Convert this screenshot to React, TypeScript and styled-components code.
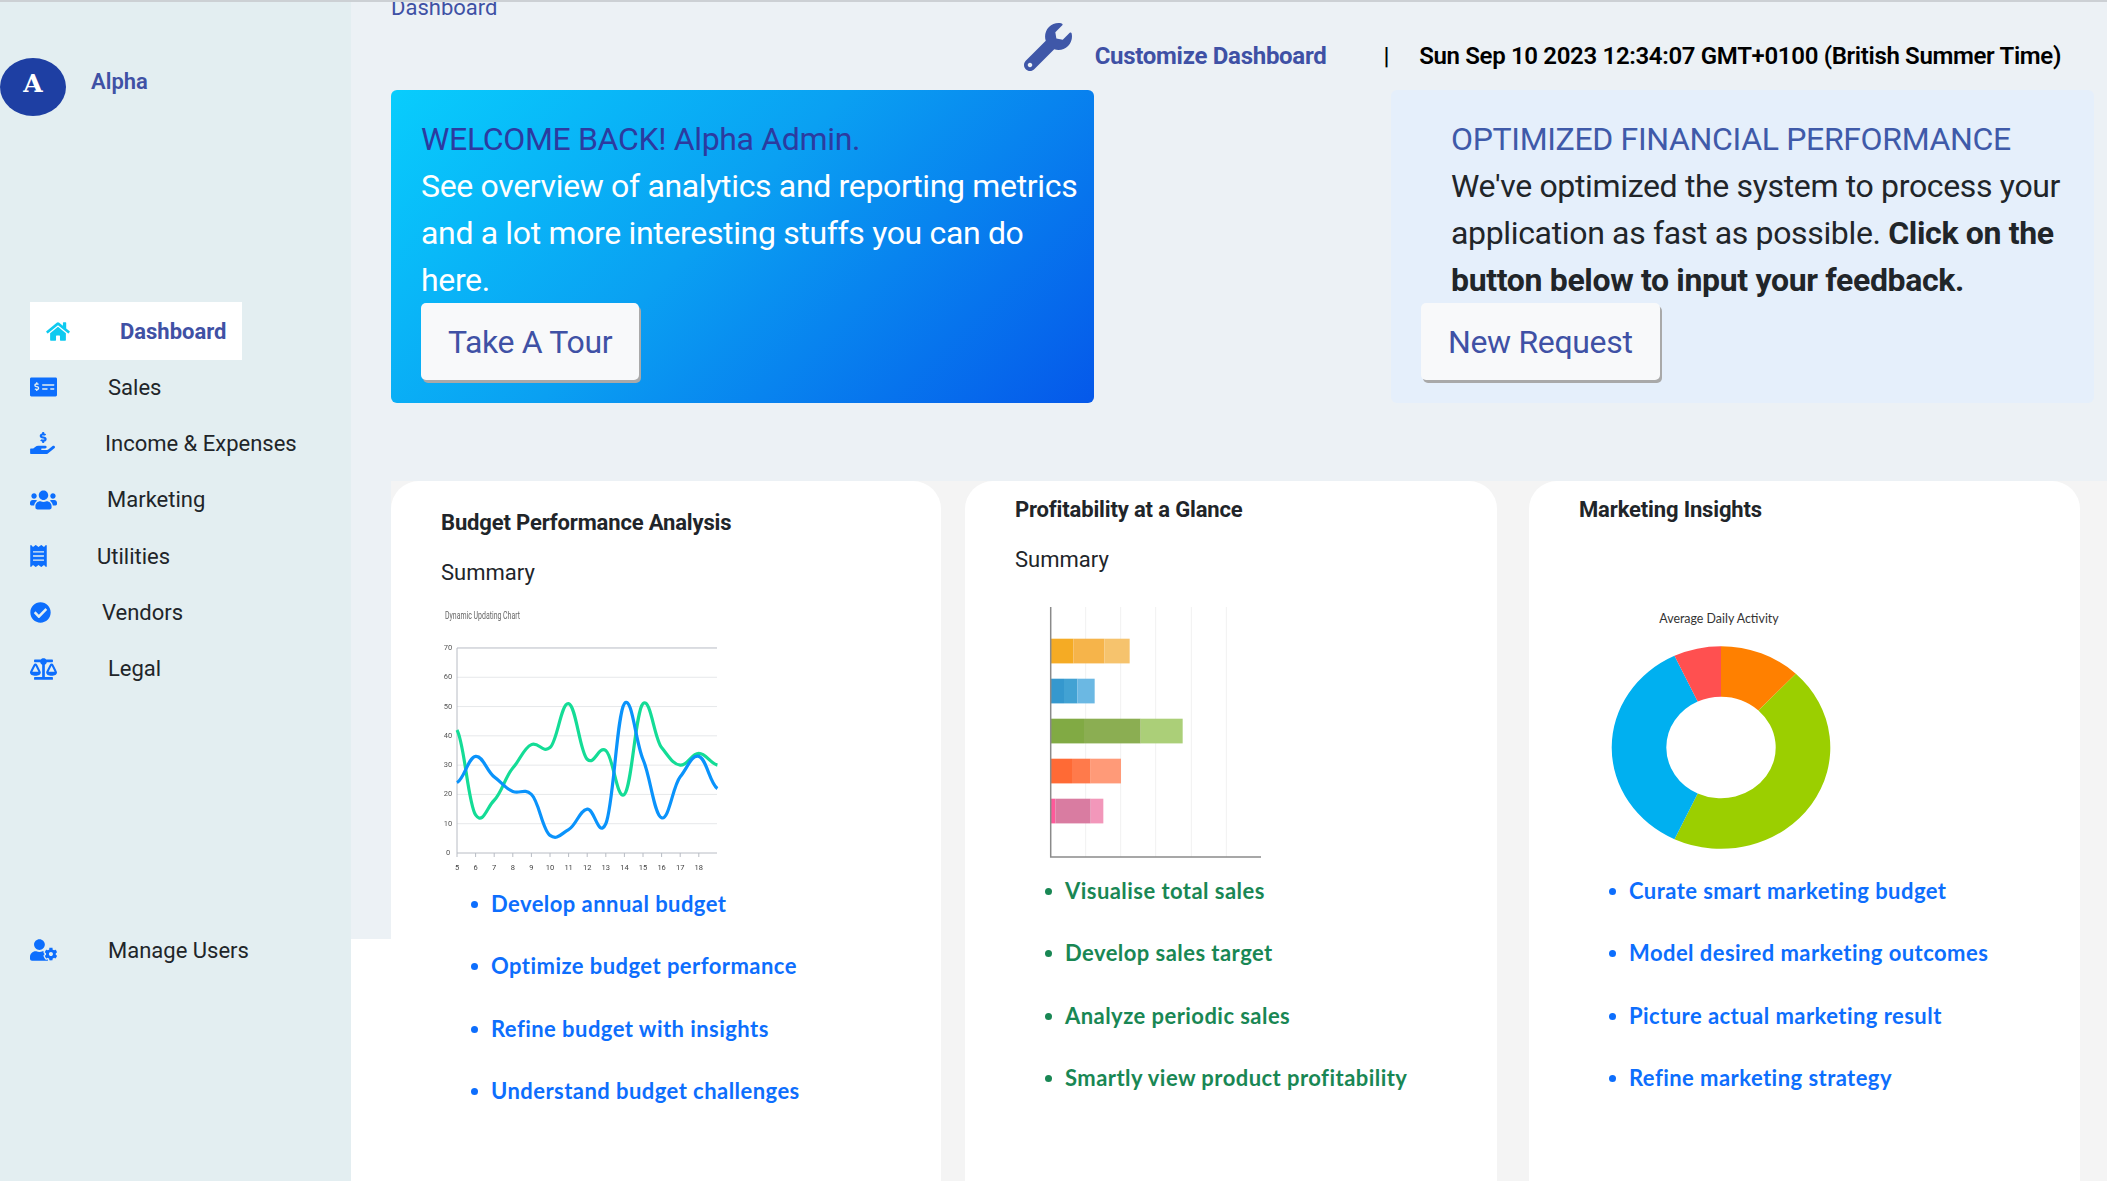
import styled, { createGlobalStyle } from 'styled-components';
import {
  FaBalanceScale,
  FaCheckCircle,
  FaHandHoldingUsd,
  FaHome,
  FaMoneyCheckAlt,
  FaReceipt,
  FaUserCog,
  FaUsers,
  FaWrench
} from 'react-icons/fa';

const GlobalStyle = createGlobalStyle`
  html, body {
    margin: 0;
    background: #fff;
    font-family: Roboto, "Liberation Sans", sans-serif;
    color: #212529;
  }
`;

const Page = styled.div`
  display: flex;
  height: 1181px;
  overflow: hidden;
  border-top: 2px solid #ccd0d4;
  box-sizing: border-box;
`;

const Sidebar = styled.aside`
  width: 351px;
  flex: none;
  background: #e3eef1;
  display: flex;
  flex-direction: column;
`;

const Profile = styled.div`
  display: flex;
  align-items: flex-start;
  gap: 25px;
  height: 300px;
  padding-top: 56px;
  box-sizing: border-box;
`;

const Avatar = styled.div`
  width: 66px;
  height: 58px;
  border-radius: 50%;
  background: #1e3fa3;
  color: #fff;
  font: bold 25px/52px 'DejaVu Serif', serif;
  text-align: center;
`;

const ProfileName = styled.div`
  font-size: 22px;
  line-height: 26px;
  font-weight: 600;
  color: #3f51a5;
  margin-top: 11px;
`;

const NavItem = styled.div<{ $active?: boolean; $gap: number }>`
  display: flex;
  align-items: center;
  height: ${p => (p.$active ? 58 : 56.3)}px;
  flex: none;
  margin-left: 30px;
  margin-bottom: ${p => (p.$active ? -1 : 0)}px;
  padding-left: ${p => (p.$active ? 16 : 0)}px;
  width: ${p => (p.$active ? 212 : 300)}px;
  box-sizing: border-box;
  gap: ${p => p.$gap}px;
  font-size: 22px;
  background: ${p => (p.$active ? '#fff' : 'transparent')};
  color: ${p => (p.$active ? '#3f51a5' : '#212529')};
  font-weight: ${p => (p.$active ? 700 : 400)};
`;

const NavIcon = styled.span<{ $w: number; $h: number; $cyan?: boolean }>`
  display: flex;
  flex: none;
  color: ${p => (p.$cyan ? '#0dcaf0' : '#0d6efd')};

  svg {
    width: ${p => p.$w}px;
    height: ${p => p.$h}px;
    display: block;
  }
`;

const NavBottom = styled.div`
  margin-top: 225.5px;
`;

const Main = styled.main`
  flex: 1;
  height: 937px;
  min-width: 0;
  background: #ecf1f5;
  padding-left: 40px;
  box-sizing: border-box;
`;

const Breadcrumb = styled.div`
  font-size: 22px;
  line-height: 22px;
  margin-top: -5px;
  color: #3f51a5;
`;

const ActionBar = styled.div`
  display: flex;
  justify-content: flex-end;
  align-items: flex-start;
  height: 71px;
  padding-right: 46px;
  font-size: 24px;
  line-height: 26px;
  letter-spacing: -0.28px;
`;

const WrenchIcon = styled(FaWrench)`
  width: 48px;
  height: 48px;
  margin-top: 4px;
  margin-right: 23px;
  color: #3f57a8;
`;

const CustomizeLink = styled.span`
  margin-top: 24px;
  color: #3f51a5;
  font-weight: 700;
`;

const Divider = styled.span`
  margin: 24px 30px 0 57px;
  color: #000;
  font-weight: 500;
`;

const DateText = styled.span`
  margin-top: 24px;
  color: #000;
  font-weight: 600;
  letter-spacing: -0.33px;
`;

const BannerRow = styled.div`
  display: flex;
  justify-content: space-between;
  padding-right: 13px;
  margin-bottom: 78px;
`;

const Banner = styled.section<{ $gradient?: boolean }>`
  width: 703px;
  height: 313px;
  border-radius: 6px;
  box-sizing: border-box;
  padding: 26px 0 0 30px;
  background: ${p => (p.$gradient ? 'linear-gradient(135deg, #08cdfd 0%, #0aa0f2 45%, #0558ea 100%)' : '#e5effb')};
`;

const BannerCopy = styled.div<{ $light?: boolean; $indent?: number }>`
  font-size: 32px;
  line-height: 47px;
  font-weight: 400;
  letter-spacing: -0.34px;
  padding-left: ${p => p.$indent ?? 0}px;
  color: ${p => (p.$light ? '#fff' : '#212529')};

  strong {
    font-weight: 700;
  }
`;

const BannerTitle = styled.div<{ $dark?: boolean }>`
  color: ${p => (p.$dark ? '#2c3ba0' : '#3f5aa9')};
`;

const BannerButton = styled.button`
  display: block;
  height: 77px;
  margin-top: -1px;
  padding: 0 27px;
  border: none;
  border-radius: 5px;
  background: #f8f9fa;
  color: #3f51a5;
  font: 400 32px Roboto, sans-serif;
  letter-spacing: -0.34px;
  box-shadow: 2px 3px 0 #a9a9a9;
`;

const CardRow = styled.div`
  display: flex;
  background: #f4f4f4;
  height: 700px;
`;

const Card = styled.section<{ $width: number; $gap: number; $top: number }>`
  width: ${p => p.$width}px;
  margin-right: ${p => p.$gap}px;
  flex: none;
  background: #fff;
  border-radius: 28px 28px 0 0;
  padding: ${p => p.$top}px 0 0 50px;
  box-sizing: border-box;
`;

const CardTitle = styled.h3`
  margin: 0 0 24px;
  font-size: 22px;
  line-height: 26px;
  font-weight: 700;
  letter-spacing: -0.15px;
  color: #212529;
`;

const CardSub = styled.div`
  font-size: 22px;
  line-height: 26px;
  height: 25px;
`;

const ChartSvg = styled.svg<{ $soft?: boolean }>`
  display: block;
  width: 300px;
  height: 288px;
  overflow: visible;
  filter: ${p => (p.$soft ? 'blur(0.5px)' : 'none')};
`;

const Points = styled.ul<{ $green?: boolean }>`
  list-style: none;
  margin: 0;
  padding: 0 0 0 50px;
  color: ${p => (p.$green ? '#198754' : '#0d6efd')};
`;

const Point = styled.li`
  position: relative;
  height: 62.4px;
  line-height: 62.4px;
  font-family: Lato, sans-serif;
  font-size: 22px;
  font-weight: 700;
  letter-spacing: 0.45px;
  white-space: nowrap;

  &::before {
    content: '';
    position: absolute;
    left: -20px;
    top: 28px;
    width: 7px;
    height: 7px;
    border-radius: 50%;
    background: currentColor;
  }
`;

const navItems = [
  { label: 'Sales', icon: <FaMoneyCheckAlt />, w: 27, h: 22, gap: 51 },
  { label: 'Income & Expenses', icon: <FaHandHoldingUsd />, w: 25, h: 22, gap: 50 },
  { label: 'Marketing', icon: <FaUsers />, w: 27, h: 22, gap: 50 },
  { label: 'Utilities', icon: <FaReceipt />, w: 17, h: 22, gap: 50 },
  { label: 'Vendors', icon: <FaCheckCircle />, w: 21, h: 21, gap: 51 },
  { label: 'Legal', icon: <FaBalanceScale />, w: 27, h: 22, gap: 51 }
];

const cards = [
  {
    title: 'Budget Performance Analysis',
    sub: 'Summary',
    width: 550,
    gap: 24,
    top: 29,
    green: false,
    points: ['Develop annual budget', 'Optimize budget performance', 'Refine budget with insights', 'Understand budget challenges']
  },
  {
    title: 'Profitability at a Glance',
    sub: 'Summary',
    width: 532,
    gap: 32,
    top: 16,
    green: true,
    points: ['Visualise total sales', 'Develop sales target', 'Analyze periodic sales', 'Smartly view product profitability']
  },
  {
    title: 'Marketing Insights',
    sub: '',
    width: 551,
    gap: 0,
    top: 16,
    green: false,
    points: ['Curate smart marketing budget', 'Model desired marketing outcomes', 'Picture actual marketing result', 'Refine marketing strategy']
  }
];

const greenSeries = [42, 13, 18, 29, 37, 36, 51, 32, 35, 20, 51, 36, 30, 34, 30];
const blueSeries = [24, 33, 26, 21, 20, 6, 8, 15, 10, 51, 32, 12, 26, 33, 22];

const px = (i: number) => 457 + i * 18.6;
const py = (v: number) => 853 - v * 2.929;

// catmull-rom through the points, same look as the smooth curve in the reference
const smoothPath = (values: number[]) => {
  const pts = values.map((v, i) => [px(i), py(v)]);
  let d = `M${pts[0][0]} ${pts[0][1]}`;
  for (let i = 0; i < pts.length - 1; i++) {
    const p0 = pts[i - 1] || pts[i];
    const p1 = pts[i];
    const p2 = pts[i + 1];
    const p3 = pts[i + 2] || p2;
    const t = 0.15;
    const c1x = p1[0] + 18.6 * 0.4;
    const c1y = p1[1] + (p2[1] - p0[1]) * t;
    const c2x = p2[0] - 18.6 * 0.4;
    const c2y = p2[1] - (p3[1] - p1[1]) * t;
    d += ` C${c1x} ${c1y} ${c2x} ${c2y} ${p2[0]} ${p2[1]}`;
  }
  return d;
};

const LineChart = () => (
  <ChartSvg $soft viewBox="441 585 300 288">
    <text x="445" y="619" fontSize="10.5" fill="#666" fontFamily="Roboto" textLength="75" lengthAdjust="spacingAndGlyphs">
      Dynamic Updating Chart
    </text>
    {[0, 10, 20, 30, 40, 50, 60, 70].map(v => (
      <g key={v}>
        <line x1="457" x2="717" y1={py(v)} y2={py(v)} stroke={v === 0 || v === 70 ? '#b8bcc4' : '#e6e8ea'} />
        <text x="448" y={py(v) + 2} fontSize="7.5" fill="#555" textAnchor="middle" fontFamily="Roboto">
          {v}
        </text>
      </g>
    ))}
    <line x1="457" x2="457" y1="648" y2="853" stroke="#b8bcc4" />
    {[5, 6, 7, 8, 9, 10, 11, 12, 13, 14, 15, 16, 17, 18].map((v, i) => (
      <g key={v}>
        <line x1={px(i)} x2={px(i)} y1="853" y2="857" stroke="#b8bcc4" />
        <text x={px(i)} y="870" fontSize="7.5" fill="#444" textAnchor="middle" fontFamily="Roboto">
          {v}
        </text>
      </g>
    ))}
    <path d={smoothPath(greenSeries)} fill="none" stroke="#14dc96" strokeWidth="3.2" />
    <path d={smoothPath(blueSeries)} fill="none" stroke="#0a93fb" strokeWidth="3.2" />
  </ChartSvg>
);

const barRows = [
  { y: 638.7, segs: [[160, '#f5ab24'], [253, '#f6b44a'], [329, '#f6c36d']] },
  { y: 678.7, segs: [[132, '#3598ce'], [172, '#42a2d3'], [224, '#6bb8e3']] },
  { y: 718.7, segs: [[192, '#81aa44'], [362, '#8bae52'], [488, '#abcf78']] },
  { y: 758.7, segs: [[156, '#ff6a35'], [212, '#ff7a4b'], [303, '#ff9a78']] },
  { y: 798.7, segs: [[106, '#ff5a9a'], [212, '#d97ca1'], [250, '#f297ba']] }
] as { y: number; segs: [number, string][] }[];

const BarChart = () => (
  <ChartSvg $soft viewBox="1015 572 300 288">
    {[197, 302, 407, 514, 619].map(g => (
      <line key={g} x1={1020 + g / 3} x2={1020 + g / 3} y1="607" y2="857" stroke="#f1f1f1" />
    ))}
    {barRows.map(row =>
      row.segs.map(([end, color], i) => {
        const start = i === 0 ? 92 : row.segs[i - 1][0];
        return <rect key={end} x={1020 + start / 3} y={row.y} width={(end - start) / 3} height="24.7" fill={color} />;
      })
    )}
    <path d="M1050.7 607V857H1261" fill="none" stroke="#8a8a8a" strokeWidth="1.5" />
  </ChartSvg>
);

const donut = [
  { from: 0, to: 43.2, color: '#ff8000' },
  { from: 43.2, to: 205.2, color: '#9bcf00' },
  { from: 205.2, to: 334.8, color: '#00b0f0' },
  { from: 334.8, to: 360, color: '#ff5050' }
];

const slice = (from: number, to: number) => {
  const cx = 1721;
  const cy = 747.5;
  const outer = [109.3, 101.3];
  const inner = [54.7, 50.8];
  const at = (r: number[], a: number) => {
    const rad = (a * Math.PI) / 180;
    return `${cx + r[0] * Math.sin(rad)} ${cy - r[1] * Math.cos(rad)}`;
  };
  const large = to - from > 180 ? 1 : 0;
  return `M${at(outer, from)} A${outer[0]} ${outer[1]} 0 ${large} 1 ${at(outer, to)} L${at(inner, to)} A${inner[0]} ${inner[1]} 0 ${large} 0 ${at(inner, from)} Z`;
};

const DonutChart = () => (
  <ChartSvg viewBox="1579 572 300 288">
    <text x="1719" y="623" fontSize="12.4" fill="#333" textAnchor="middle" fontFamily="Lato">
      Average Daily Activity
    </text>
    {donut.map(s => (
      <path key={s.color} d={slice(s.from, s.to)} fill={s.color} />
    ))}
  </ChartSvg>
);

const charts = [<LineChart />, <BarChart />, <DonutChart />];

export default function App() {
  return (
    <>
      <GlobalStyle />
      <Page>
        <Sidebar>
          <Profile>
            <Avatar>A</Avatar>
            <ProfileName>Alpha</ProfileName>
          </Profile>
          <NavItem $active $gap={50}>
            <NavIcon $w={24} $h={21} $cyan>
              <FaHome />
            </NavIcon>
            Dashboard
          </NavItem>
          {navItems.map(item => (
            <NavItem key={item.label} $gap={item.gap}>
              <NavIcon $w={item.w} $h={item.h}>
                {item.icon}
              </NavIcon>
              {item.label}
            </NavItem>
          ))}
          <NavBottom>
            <NavItem $gap={51}>
              <NavIcon $w={27} $h={22}>
                <FaUserCog />
              </NavIcon>
              Manage Users
            </NavItem>
          </NavBottom>
        </Sidebar>
        <Main>
          <Breadcrumb>Dashboard</Breadcrumb>
          <ActionBar>
            <WrenchIcon />
            <CustomizeLink>Customize Dashboard</CustomizeLink>
            <Divider>|</Divider>
            <DateText>Sun Sep 10 2023 12:34:07 GMT+0100 (British Summer Time)</DateText>
          </ActionBar>
          <BannerRow>
            <Banner $gradient>
              <BannerCopy $light>
                <BannerTitle $dark>WELCOME BACK! Alpha Admin.</BannerTitle>
                See overview of analytics and reporting metrics and a lot more interesting stuffs you can do here.
              </BannerCopy>
              <BannerButton>Take A Tour</BannerButton>
            </Banner>
            <Banner>
              <BannerCopy $indent={30}>
                <BannerTitle>OPTIMIZED FINANCIAL PERFORMANCE</BannerTitle>
                We've optimized the system to process your application as fast as possible.{' '}
                <strong>Click on the button below to input your feedback.</strong>
              </BannerCopy>
              <BannerButton>New Request</BannerButton>
            </Banner>
          </BannerRow>
          <CardRow>
            {cards.map((card, i) => (
              <Card key={card.title} $width={card.width} $gap={card.gap} $top={card.top}>
                <CardTitle>{card.title}</CardTitle>
                <CardSub>{card.sub}</CardSub>
                {charts[i]}
                <Points $green={card.green}>
                  {card.points.map(point => (
                    <Point key={point}>{point}</Point>
                  ))}
                </Points>
              </Card>
            ))}
          </CardRow>
        </Main>
      </Page>
    </>
  );
}
